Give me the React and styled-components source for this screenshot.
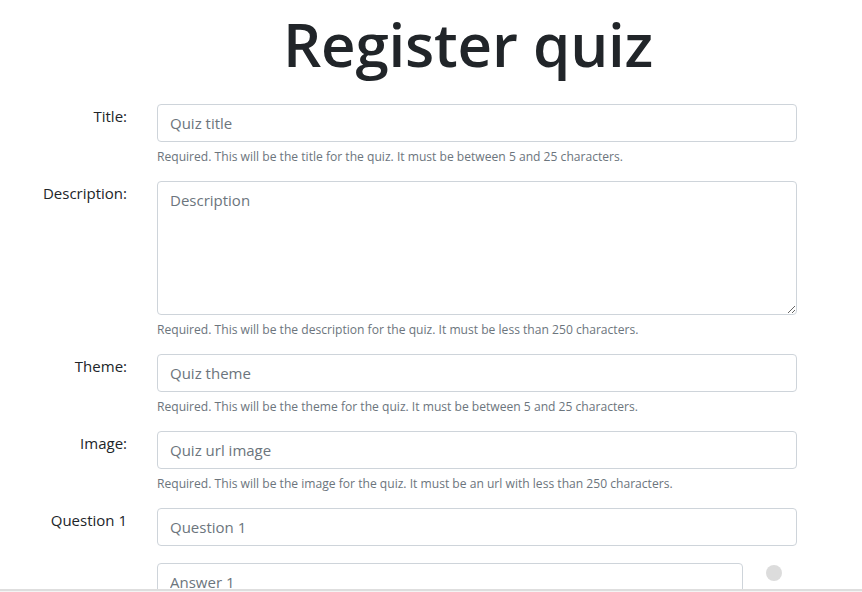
import React from "react";
import styled, { createGlobalStyle } from "styled-components";

const GlobalStyle = createGlobalStyle`
  html, body { margin: 0; padding: 0; background: #fff; }
  body {
    font-family: "Open Sans", "Noto Sans", "Liberation Sans", sans-serif;
    color: #212529;
    font-size: 16px;
    line-height: 1.5;
  }
  * { box-sizing: border-box; }
`;

const Page = styled.main`
  padding: 8px 0 40px;
`;

const Heading = styled.h1`
  margin: 0 0 24px;
  padding-left: 74px;
  text-align: center;
  font-size: 60px;
  font-weight: 600;
  line-height: 72px;
  letter-spacing: -0.2px;
  color: #212529;
`;

const Form = styled.form`
  display: flex;
  flex-direction: column;
`;

const Row = styled.div`
  display: grid;
  grid-template-columns: 127px 640px;
  column-gap: 30px;
  margin-bottom: ${(p) => p.$gap ?? 16}px;
`;

const Label = styled.label`
  text-align: right;
  font-size: 15px;
  line-height: 24px;
  color: #212529;
`;

const Field = styled.div`
  display: flex;
  flex-direction: column;
`;

const inputBase = `
  display: block;
  width: 100%;
  font-family: inherit;
  font-size: 15px;
  line-height: 24px;
  color: #495057;
  background: #fff;
  border: 1px solid #ced4da;
  border-radius: 4px;
  padding: 6px 12px;
  outline: none;
  &::placeholder { color: #6c757d; opacity: 1; }
`;

const Input = styled.input`
  ${inputBase}
  height: 38px;
`;

const TextArea = styled.textarea`
  ${inputBase}
  height: 134px;
  resize: vertical;
`;

const Help = styled.small`
  display: block;
  margin-top: 5px;
  margin-bottom: -1px;
  font-size: 12.1px;
  line-height: 19px;
  color: #6c757d;
`;

const AnswerLine = styled.div`
  display: flex;
  align-items: flex-start;
`;

const AnswerInput = styled(Input)`
  flex: 0 0 586px;
  width: 586px;
`;

const Radio = styled.input.attrs({ type: "radio" })`
  appearance: none;
  -webkit-appearance: none;
  margin: 2px 0 0 23px;
  width: 16px;
  height: 16px;
  border-radius: 50%;
  border: none;
  background: #dcdcdc;
  flex: none;
`;

const Footer = styled.div`
  position: fixed;
  left: 0;
  right: 0;
  bottom: 0;
  height: 3px;
  border-top: 2px solid #dedede;
  background: #f4f4f4;
`;

const fields = [
  {
    id: "title",
    label: "Title:",
    placeholder: "Quiz title",
    help: "Required. This will be the title for the quiz. It must be between 5 and 25 characters.",
  },
  {
    id: "description",
    label: "Description:",
    placeholder: "Description",
    help: "Required. This will be the description for the quiz. It must be less than 250 characters.",
    multiline: true,
  },
  {
    id: "theme",
    label: "Theme:",
    placeholder: "Quiz theme",
    help: "Required. This will be the theme for the quiz. It must be between 5 and 25 characters.",
  },
  {
    id: "image",
    label: "Image:",
    placeholder: "Quiz url image",
    help: "Required. This will be the image for the quiz. It must be an url with less than 250 characters.",
  },
];

export default function App() {
  return (
    <>
      <GlobalStyle />
      <Page>
        <Heading>Register quiz</Heading>
        <Form onSubmit={(e) => e.preventDefault()}>
          {fields.map((f) => (
            <Row key={f.id}>
              <Label htmlFor={f.id}>{f.label}</Label>
              <Field>
                {f.multiline ? (
                  <TextArea id={f.id} rows={5} placeholder={f.placeholder} />
                ) : (
                  <Input id={f.id} type="text" placeholder={f.placeholder} />
                )}
                <Help>{f.help}</Help>
              </Field>
            </Row>
          ))}
          <Row $gap={17}>
            <Label htmlFor="question1">Question 1</Label>
            <Field>
              <Input id="question1" type="text" placeholder="Question 1" />
            </Field>
          </Row>
          {[1, 2, 3, 4].map((n) => (
            <Row key={n}>
              <span />
              <AnswerLine>
                <AnswerInput type="text" placeholder={`Answer ${n}`} />
                <Radio name="correct" aria-label={`Answer ${n} is correct`} />
              </AnswerLine>
            </Row>
          ))}
        </Form>
      </Page>
      <Footer />
    </>
  );
}
